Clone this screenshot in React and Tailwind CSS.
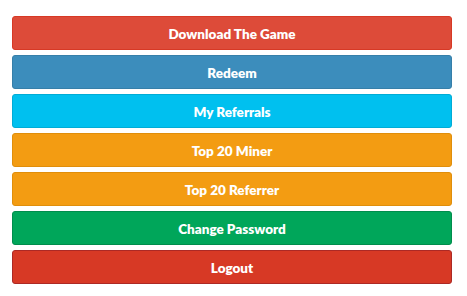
const buttons = [
  { label: "Download The Game", cls: "bg-[#dd4b39] border-[#d73925]" },
  { label: "Redeem", cls: "bg-[#3c8dbc] border-[#367fa9]" },
  { label: "My Referrals", cls: "bg-[#00c0ef] border-[#00acd6]" },
  { label: "Top 20 Miner", cls: "bg-[#f39c12] border-[#e08e0b]" },
  { label: "Top 20 Referrer", cls: "bg-[#f39c12] border-[#e08e0b]" },
  { label: "Change Password", cls: "bg-[#00a65a] border-[#008d4c]" },
  { label: "Logout", cls: "bg-[#d73925] border-[#ac2925]" },
];

export default function App() {
  return (
    <div className="w-[467px] h-[296px] bg-white pt-4 pl-3 pr-[15px] font-['Lato','Open_Sans',sans-serif]">
      <div className="flex flex-col gap-[5px]">
        {buttons.map((b) => (
          <button
            key={b.label}
            className={`h-[34px] w-full rounded-[3px] border pt-[2px] text-white text-[13.5px] font-extrabold ${b.cls}`}
          >
            {b.label}
          </button>
        ))}
      </div>
    </div>
  );
}
